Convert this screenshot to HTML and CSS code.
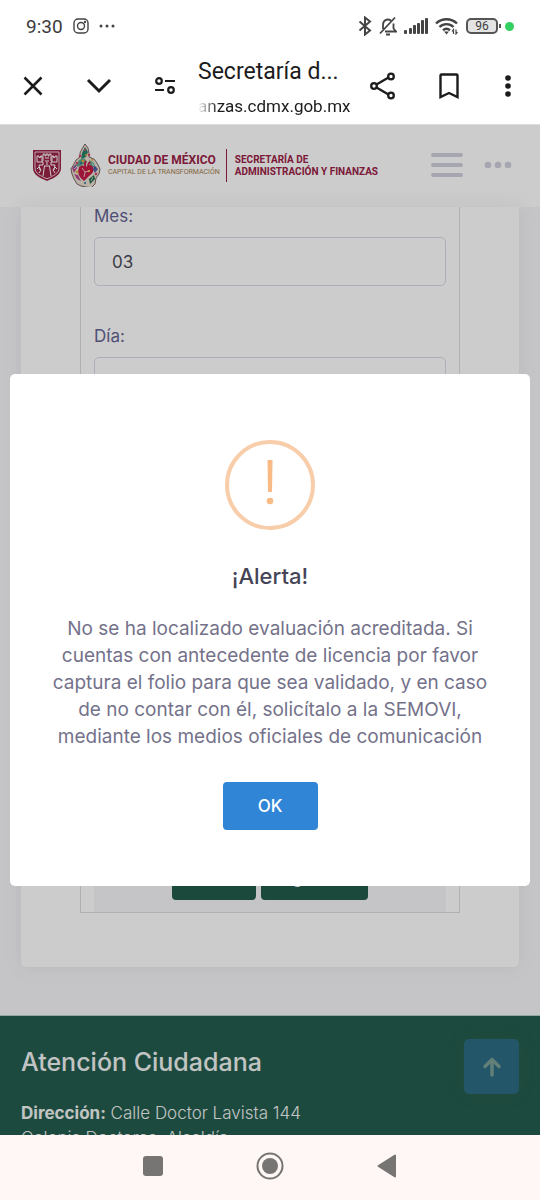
FILE: index.html
```html
<!DOCTYPE html>
<html lang="es">
<head>
    <meta charset="UTF-8">
    <meta name="viewport" content="width=device-width, initial-scale=1.0">
    <title>Secretaría de Administración y Finanzas</title>
    <link rel="stylesheet" href="styles.css">
</head>

<body>

    <!-- Status bar -->
    <div class="status-bar">
        <span class="clock">9:30</span>
        <svg width="16" height="16" viewBox="0 0 16 16" fill="none" stroke="#444" stroke-width="1.4">
            <rect x="1" y="1" width="14" height="14" rx="4"/>
            <circle cx="8" cy="8" r="3.5"/>
            <circle cx="12" cy="4" r=".5" fill="#444"/>
        </svg>
        <svg width="18" height="4" viewBox="0 0 18 4" fill="#444">
            <circle cx="2" cy="2" r="1.5"/><circle cx="8" cy="2" r="1.5"/><circle cx="14" cy="2" r="1.5"/>
        </svg>
        <div class="status-icons">
            <svg width="14" height="20" viewBox="0 0 14 20" fill="none" stroke="#444" stroke-width="2">
                <path d="M1.5 5.5 12 14.5 7 18.5V1.5L12 5.5 1.5 14.5"/>
            </svg>
            <svg width="18" height="20" viewBox="0 0 18 20" fill="none" stroke="#444" stroke-width="1.8">
                <path d="M12 4.5C8 2 4 4.500 4 9v4M6 15.500h11l-2.500-3V7.500M1 17.500 16 1.500M7 18.500h4"/>
            </svg>
            <svg width="24" height="18" viewBox="0 0 24 18" fill="#444">
                <rect x="0" y="13" width="3" height="4" rx="1"/><rect x="5" y="11" width="3" height="6" rx="1"/>
                <rect x="9" y="8" width="3" height="9" rx="1"/><rect x="13" y="6" width="3" height="11" rx="1"/>
                <rect x="17" y="3" width="3" height="14" rx="1"/><rect x="21" y="1" width="3" height="16" rx="1"/>
            </svg>
            <svg width="24" height="18" viewBox="0 0 24 18" fill="none" stroke="#444" stroke-width="2.4">
                <path d="M1 6.500a15 15 0 0 1 21 0M4.500 10a10 10 0 0 1 14 0M8 13.300a5.500 5.500 0 0 1 7 0"/>
                <path d="M9 14.500h5l-2.500 3z" fill="#444" stroke="none"/>
                <path d="M18.500 17v-4.500l-1.500 2M21 12.500V17l1.500-2" stroke-width="1.2"/>
            </svg>
            <span class="battery">96</span>
            <span class="mic-dot"></span>
        </div>
    </div>

    <!-- Browser toolbar -->
    <div class="toolbar">
        <button class="tool" aria-label="Cerrar">
            <svg width="20" height="20" viewBox="0 0 20 20" fill="none" stroke="#1c1c1c" stroke-width="2.5"><path d="M1.500 1.500l17 17M18.500 1.500l-17 17"/></svg>
        </button>
        <button class="tool" aria-label="Minimizar">
            <svg width="26" height="16" viewBox="0 0 26 16" fill="none" stroke="#1c1c1c" stroke-width="3"><path d="M2 2l11 11L24 2"/></svg>
        </button>
        <button class="tool" aria-label="Permisos del sitio">
            <svg width="22" height="18" viewBox="0 0 22 18" fill="none" stroke="#1c1c1c" stroke-width="2.2">
                <circle cx="5" cy="4" r="2.800"/><path d="M11 4h10M1 13h9"/><circle cx="17" cy="13" r="2.800"/>
            </svg>
        </button>
        <div class="page-info">
            <div class="page-title">Secretaría d...</div>
            <div class="page-url">anzas.cdmx.gob.mx</div>
        </div>
        <button class="tool" aria-label="Compartir">
            <svg width="26" height="28" viewBox="0 0 26 28" fill="none" stroke="#1c1c1c" stroke-width="2.3">
                <path d="M6.500 12.500l12-7M6.500 15.500l12 7"/><circle cx="4" cy="14" r="2.800"/><circle cx="21" cy="4.500" r="2.800"/><circle cx="21" cy="23.500" r="2.800"/>
            </svg>
        </button>
        <button class="tool" aria-label="Guardar">
            <svg width="20" height="26" viewBox="0 0 20 26" fill="none" stroke="#1c1c1c" stroke-width="2.4"><path d="M1.500 2.500q0-1 1-1h15q1 0 1 1v21.500L10 20l-8.500 4z"/></svg>
        </button>
        <button class="tool tool-menu" aria-label="Más opciones">
            <svg width="6" height="24" viewBox="0 0 6 24" fill="#1c1c1c"><circle cx="3" cy="4" r="2.800"/><circle cx="3" cy="12" r="2.800"/><circle cx="3" cy="20" r="2.800"/></svg>
        </button>
    </div>

    <!-- Web page -->
    <div class="site">
        <header class="site-header">
            <svg class="shield" width="30" height="34" viewBox="0 0 30 34">
                <path d="M1 2h28v18c0 7-7 10-14 13C8 30 1 27 1 20z" fill="#9b2247"/>
                <path d="M3 4h24v16c0 5.500-6 8-12 10.800C9 28 3 25.500 3 20z" fill="none" stroke="#fff" stroke-width=".8"/>
                <path d="M11 13V6h2v2h1V6h2v2h1V6h2v7M5 14V8h2v1.500h1.500V8H10v6M20 14V8h1.500v1.500H23V8h2v6M5 14h6v3H7l1 5M25 14h-6v3h4l-1 5M12 18h6M12.500 18l-1.500 10M17.500 18l1.500 10M5 21l2-2 2 3-2 3M25 21l-2-2-2 3 2 3M13 10h4M13 13h4M15 14v3" fill="none" stroke="#fff" stroke-width="1"/>
            </svg>
            <svg class="emblem" width="32" height="44" viewBox="0 0 32 44">
                <path d="M16 1l3 4 1 5 0 4 5 2 3 4 3 6-1 5-3 4-1 6-4 4-5-1-5-1-4-2-3-5-2-5-1-5 3-5 2-4 4-3 0-4 2-4z" fill="#e9dfd0" stroke="#5a4340" stroke-width=".8"/>
                <path d="M16 4l3 5-2 5-5 2 1-6z" fill="#26806b"/>
                <path d="M10 17l5-2 3 4-6 4-6 1zM20 17l5 3 1 5-5-3z" fill="#5aa58e"/>
                <path d="M10 24q4-3 7 0 4-4 7 0 2 5-4 9l-5 5q-8-6-5-14z" fill="#c41946"/>
                <path d="M17 18q-2 3 0 8M21 19q-3 2-1 7" fill="none" stroke="#c41946" stroke-width="2"/>
                <path d="M3 25l4-4 1 4-3 5zM5 31l4 1 3 6-4-2z" fill="#b54a8f"/>
                <path d="M25 22l4 4-3 4-2-3z" fill="#665ca5"/>
                <path d="M20 36l5-4 1 4-5 5z" fill="#20684b"/>
                <g fill="#d84473"><circle cx="11" cy="13" r="1.300"/><circle cx="20" cy="12" r="1.300"/><circle cx="8" cy="20" r="1.300"/><circle cx="27" cy="31" r="1.300"/><circle cx="16" cy="7" r="1"/></g>
                <g fill="#e7a938"><circle cx="14" cy="18" r="1.300"/><circle cx="23" cy="17" r="1"/><circle cx="8" cy="29" r="1.200"/><circle cx="20" cy="28" r="1.200"/><circle cx="17" cy="12" r="1"/></g>
                <g fill="#2f6b9b"><circle cx="6" cy="24" r="1"/><circle cx="12" cy="20" r="1"/><circle cx="26" cy="25" r="1.200"/><circle cx="16" cy="40" r="1"/></g>
                <path d="M13 25l3 4 4-1M16 29l-1 5M22 38l2-4M5 26l3-3M23 20l2 3" fill="none" stroke="#fff" stroke-width=".7"/>
            </svg>
            <div class="brand">
                <div class="brand-name">CIUDAD DE MÉXICO</div>
                <div class="brand-motto">CAPITAL DE LA TRANSFORMACIÓN</div>
            </div>
            <div class="brand-office">SECRETARÍA DE<br>ADMINISTRACIÓN Y FINANZAS</div>
            <button class="menu-button" aria-label="Menú">
                <svg width="34" height="26" viewBox="0 0 34 26" fill="none" stroke="#cfd0dd" stroke-width="4" stroke-linecap="round"><path d="M3 3h28M3 13h28M3 23h28"/></svg>
            </button>
            <button class="menu-button" aria-label="Opciones">
                <svg width="28" height="8" viewBox="0 0 28 8" fill="#cfd0dd"><circle cx="4" cy="4" r="3.300"/><circle cx="14" cy="4" r="3.300"/><circle cx="24" cy="4" r="3.300"/></svg>
            </button>
        </header>

        <main class="content">
            <div class="card">
                <form class="form-box">
                    <label for="mes">Mes:</label>
                    <input type="text" id="mes" value="03">
                    <label for="dia">Día:</label>
                    <input type="text" id="dia">
                    <div class="form-actions">
                        <button type="button" class="btn-green">Atrás</button>
                        <button type="button" class="btn-green">Siguiente</button>
                    </div>
                </form>
            </div>
        </main>

        <footer class="footer">
            <h2>Atención Ciudadana</h2>
            <p><strong>Dirección:</strong> Calle Doctor Lavista 144<br>Colonia Doctores, Alcaldía</p>
        </footer>

        <a href="#" class="scroll-top" aria-label="Subir">
            <svg width="20" height="20" viewBox="0 0 20 20" fill="none" stroke="#7ba195" stroke-width="3.4" stroke-linecap="round" stroke-linejoin="round"><path d="M10 18V2.500M3 9.500l7-7 7 7"/></svg>
        </a>

        <!-- Alert -->
        <div class="overlay">
            <div class="alert" role="alertdialog" aria-labelledby="alert-title" aria-describedby="alert-text">
                <svg class="alert-icon" width="90" height="90" viewBox="0 0 90 90">
                    <circle cx="45" cy="45" r="43" fill="none" stroke="#f8cda9" stroke-width="4"/>
                    <path d="M42.500 20h5l-.5 32h-4z" fill="#f8bb86"/>
                    <circle cx="45" cy="61" r="3.300" fill="#f8bb86"/>
                </svg>
                <h1 id="alert-title">¡Alerta!</h1>
                <p id="alert-text">No se ha localizado evaluación acreditada. Si cuentas con antecedente de licencia por favor captura el folio para que sea validado, y en caso de no contar con él, solicítalo a la SEMOVI, mediante los medios oficiales de comunicación</p>
                <button type="button" class="btn-ok">OK</button>
            </div>
        </div>
    </div>

    <!-- Phone navigation -->
    <nav class="phone-nav">
        <button aria-label="Recientes">
            <svg width="20" height="20" viewBox="0 0 20 20"><rect width="20" height="20" rx="3" fill="#777574"/></svg>
        </button>
        <button aria-label="Inicio">
            <svg width="28" height="28" viewBox="0 0 28 28"><circle cx="14" cy="14" r="12.500" fill="none" stroke="#777574" stroke-width="2"/><circle cx="14" cy="14" r="8" fill="#777574"/></svg>
        </button>
        <button aria-label="Atrás">
            <svg width="20" height="24" viewBox="0 0 20 24"><path d="M18 1.500v21L1.500 12z" fill="#777574" stroke="#777574" stroke-width="2" stroke-linejoin="round"/></svg>
        </button>
    </nav>

</body>

</html>
```
FILE: styles.css
```css
* {
    box-sizing: border-box;
}

body {
    font-family: Inter, "Open Sans", sans-serif;
    background-color: #ffffff;
    margin: 0;
    height: 100vh;
    display: flex;
    flex-direction: column;
}

button {
    font-family: inherit;
    border: none;
    padding: 0;
    background: none;
    cursor: pointer;
}

svg {
    display: block;
    flex: none;
}

/* Status bar */
.status-bar {
    display: flex;
    align-items: center;
    gap: 10px;
    height: 48px;
    padding: 4px 26px 0;
    font-family: Roboto, sans-serif;
    color: #3c3c3c;
}

.clock {
    font-size: 19px;
}

.status-icons {
    display: flex;
    align-items: center;
    gap: 7px;
    margin-left: auto;
}

.battery {
    position: relative;
    width: 32px;
    height: 16px;
    border: 2px solid #555;
    border-radius: 5px;
    background-color: #e4e4e4;
    font-size: 12px;
    line-height: 12px;
    text-align: center;
}

/* Battery tip */
.battery::after {
    content: "";
    position: absolute;
    right: -5px;
    top: 4px;
    width: 2px;
    height: 4px;
    background-color: #555;
}

.mic-dot {
    width: 9px;
    height: 9px;
    border-radius: 50%;
    background-color: #34d062;
}

/* Browser toolbar */
.toolbar {
    display: flex;
    align-items: center;
    height: 77px;
    padding-right: 6px;
    border-bottom: 1px solid #dddddd;
    font-family: Roboto, sans-serif;
    color: #1c1c1c;
}

.tool {
    display: flex;
    justify-content: center;
    align-items: center;
    flex: none;
    width: 66px;
    height: 66px;
}

.tool-menu {
    width: 52px;
}

.page-info {
    flex: 1;
    min-width: 0;
    padding-top: 6px;
    white-space: nowrap;
}

.page-title {
    font-size: 23px;
    line-height: 35px;
}

.page-url {
    font-size: 17px;
    line-height: 35px;
    mask-image: linear-gradient(to right, transparent, #000 20px);
}

/* Web page */
.site {
    position: relative;
    flex: 1;
    min-height: 0;
    display: flex;
    flex-direction: column;
    overflow: hidden;
    background-color: #f7f7fa;
}

.site-header {
    display: flex;
    align-items: center;
    flex: none;
    height: 82px;
    padding: 0 28px 2px 32px;
    background-color: #ffffff;
    font-family: Roboto, sans-serif;
    font-weight: bold;
}

.emblem {
    margin-left: 7px;
}

.brand {
    margin-left: 7px;
    padding: 4px 6px 4px 0;
    border-right: 1px solid #9b2247;
    white-space: nowrap;
}

.brand-name {
    font-size: 12px;
    line-height: 14px;
    color: #9b2247;
}

.brand-motto {
    font-size: 7px;
    line-height: 11px;
    font-weight: normal;
    color: #a57f4f;
}

.brand-office {
    margin-left: 8px;
    margin-right: auto;
    padding-top: 2px;
    font-size: 10px;
    line-height: 12px;
    color: #9b2247;
    white-space: nowrap;
}

.menu-button {
    margin-left: 20px;
}

.content {
    flex: 1;
    min-height: 0;
    display: flex;
    padding: 0 21px 48px;
}

.card {
    flex: 1;
    display: flex;
    padding: 0 59px 54px;
    background-color: #ffffff;
    border-radius: 0 0 5px 5px;
    box-shadow: 0 0 20px rgba(60, 60, 110, 0.08);
}

.form-box {
    flex: 1;
    display: flex;
    flex-direction: column;
    padding: 0 13px;
    border: 1px solid #dcdce2;
    border-top: none;
}

.form-box label {
    font-size: 17px;
    line-height: 18px;
    margin-bottom: 12px;
    color: #646493;
}

.form-box input {
    width: 100%;
    height: 49px;
    margin-bottom: 41px;
    padding: 0 17px;
    border: 1px solid #dadaea;
    border-radius: 5px;
    background: none;
    font-family: inherit;
    font-size: 17px;
    color: #4c4c58;
}

.form-actions {
    display: flex;
    justify-content: center;
    gap: 5px;
    margin-top: auto;
    padding: 12px 0;
    background-color: #f7f7fa;
}

.btn-green {
    min-width: 84px;
    height: 48px;
    padding: 2px 16px 0;
    border-radius: 4px;
    background-color: #225c4c;
    color: #ffffff;
    font-size: 17px;
}

.footer {
    flex: none;
    height: 120px;
    padding: 27px 21px 0;
    overflow: hidden;
    border-top: 1px solid #b9d0c9;
    background-color: #245d4f;
    color: #f2f5f4;
}

.footer h2 {
    margin: 0 0 20px;
    font-size: 25px;
    line-height: 38px;
    font-weight: 500;
}

.footer p {
    margin: 0;
    font-size: 17px;
    line-height: 25px;
    font-weight: 300;
}

.footer strong {
    font-weight: 700;
}

/* Stays in the corner over the footer */
.scroll-top {
    position: absolute;
    right: 21px;
    bottom: 41px;
    display: flex;
    justify-content: center;
    align-items: center;
    width: 55px;
    height: 55px;
    border-radius: 5px;
    background-color: #2c6c84;
    box-shadow: 0 0 14px rgba(60, 100, 70, 0.4);
}

/* Alert */
.overlay {
    position: absolute;
    inset: 0;
    display: flex;
    align-items: center;
    padding: 10px;
    background-color: rgba(0, 0, 0, 0.2);
}

.alert {
    flex: 1;
    display: flex;
    flex-direction: column;
    align-items: center;
    padding: 66px 34px 56px;
    border-radius: 5px;
    background-color: #ffffff;
    text-align: center;
}

.alert h1 {
    margin: 29px 0 22px;
    font-size: 22px;
    line-height: 34px;
    font-weight: 500;
    color: #464457;
}

.alert p {
    margin: 0 0 32px;
    font-size: 19px;
    line-height: 27px;
    color: #74728a;
}

.btn-ok {
    width: 95px;
    height: 48px;
    border-radius: 4px;
    background-color: #3085d6;
    color: #ffffff;
    font-size: 17px;
    font-weight: 500;
}

/* Phone navigation */
.phone-nav {
    display: flex;
    justify-content: center;
    flex: none;
    height: 65px;
    padding-bottom: 3px;
    background-color: #fff7f5;
}

.phone-nav button {
    display: flex;
    justify-content: center;
    align-items: center;
    width: 117px;
}
```
